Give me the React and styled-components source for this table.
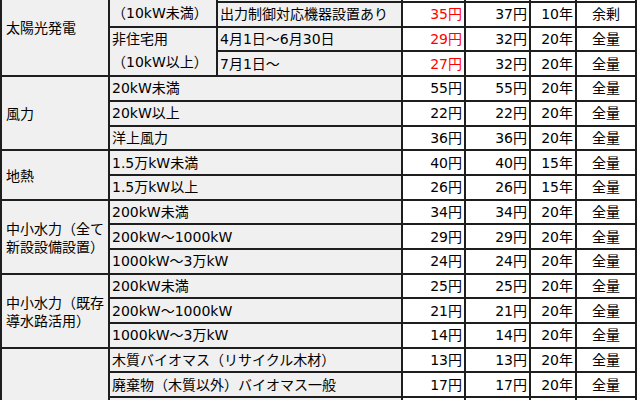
import styled, { createGlobalStyle } from "styled-components"

const GlobalStyle = createGlobalStyle`
  * {
    box-sizing: border-box;
  }
  body {
    margin: 0;
    background-color: #ffffff;
    font-family: "DejaVu Sans", "Noto Sans CJK JP", sans-serif;
  }
`

// larguras das colunas (borda incluida)
const colunas = [108, 108, 185, 63, 65, 46, 60]

const tarifas = [
  { grupo: "太陽光発電", gSpan: 4, sub: ["住宅用", "（10kW未満）"], sSpan: 2, item: "出力制御対応機器設置なし", novo: "33円", antigo: "37円", anos: "10年", tipo: "余剰", destaque: true },
  { item: "出力制御対応機器設置あり", novo: "35円", antigo: "37円", anos: "10年", tipo: "余剰", destaque: true },
  { sub: ["非住宅用", "（10kW以上）"], sSpan: 2, item: "4月1日～6月30日", novo: "29円", antigo: "32円", anos: "20年", tipo: "全量", destaque: true },
  { item: "7月1日～", novo: "27円", antigo: "32円", anos: "20年", tipo: "全量", destaque: true },
  { grupo: "風力", gSpan: 3, largo: true, item: "20kW未満", novo: "55円", antigo: "55円", anos: "20年", tipo: "全量" },
  { largo: true, item: "20kW以上", novo: "22円", antigo: "22円", anos: "20年", tipo: "全量" },
  { largo: true, item: "洋上風力", novo: "36円", antigo: "36円", anos: "20年", tipo: "全量" },
  { grupo: "地熱", gSpan: 2, largo: true, item: "1.5万kW未満", novo: "40円", antigo: "40円", anos: "15年", tipo: "全量" },
  { largo: true, item: "1.5万kW以上", novo: "26円", antigo: "26円", anos: "15年", tipo: "全量" },
  { grupo: "中小水力（全て新設設備設置）", gSpan: 3, largo: true, item: "200kW未満", novo: "34円", antigo: "34円", anos: "20年", tipo: "全量" },
  { largo: true, item: "200kW～1000kW", novo: "29円", antigo: "29円", anos: "20年", tipo: "全量" },
  { largo: true, item: "1000kW～3万kW", novo: "24円", antigo: "24円", anos: "20年", tipo: "全量" },
  { grupo: "中小水力（既存導水路活用）", gSpan: 3, largo: true, item: "200kW未満", novo: "25円", antigo: "25円", anos: "20年", tipo: "全量" },
  { largo: true, item: "200kW～1000kW", novo: "21円", antigo: "21円", anos: "20年", tipo: "全量" },
  { largo: true, item: "1000kW～3万kW", novo: "14円", antigo: "14円", anos: "20年", tipo: "全量" },
  { grupo: "バイオマス", gSpan: 6, largo: true, item: "木質バイオマス（リサイクル木材）", novo: "13円", antigo: "13円", anos: "20年", tipo: "全量" },
  { largo: true, item: "廃棄物（木質以外）バイオマス一般", novo: "17円", antigo: "17円", anos: "20年", tipo: "全量" },
  { largo: true, item: "一般木質バイオマス・農作物残さ", novo: "24円", antigo: "24円", anos: "20年", tipo: "全量" },
  { largo: true, item: "未利用木材（2000kW以上）", novo: "32円", antigo: "32円", anos: "20年", tipo: "全量" },
  { largo: true, item: "未利用木材（2000kW未満）", novo: "40円", antigo: "32円", anos: "20年", tipo: "全量" },
  { largo: true, item: "メタン発酵ガス", novo: "39円", antigo: "39円", anos: "20年", tipo: "全量" },
]

export default function App() {
  return (
    <Pagina>
      <GlobalStyle />
      <Tabela>
        <colgroup>
          {colunas.map((w, i) => (
            <Coluna key={i} $largura={w} />
          ))}
        </colgroup>
        <tbody>
          {tarifas.map((t, i) => (
            <Linha key={i}>
              {t.grupo && <Grupo rowSpan={t.gSpan}>{t.grupo}</Grupo>}
              {t.sub && (
                <Rotulo rowSpan={t.sSpan}>
                  {t.sub.map((s) => (
                    <SubLinha key={s}>{s}</SubLinha>
                  ))}
                </Rotulo>
              )}
              <Rotulo colSpan={t.largo ? 2 : 1}>{t.item}</Rotulo>
              <Valor $destaque={t.destaque}>{t.novo}</Valor>
              <Valor>{t.antigo}</Valor>
              <Valor>{t.anos}</Valor>
              <Tipo>{t.tipo}</Tipo>
            </Linha>
          ))}
        </tbody>
      </Tabela>
    </Pagina>
  )
}

const Pagina = styled.div`
  height: 100vh;
  overflow: hidden;
`
const Tabela = styled.table`
  width: 637px;
  margin-top: -23.7px;
  table-layout: fixed;
  border-collapse: separate;
  border-spacing: 0;
  border: 1px solid #1e1e1e;
  font-size: 14px;
  line-height: 18px;
  color: #000;
  text-spacing-trim: space-all;
`
const Coluna = styled.col`
  width: ${(p) => p.$largura}px;
`
const Linha = styled.tr`
  height: 24.7px;
`
const Celula = styled.td`
  border: 1px solid #1e1e1e;
  padding: 0 2px;
  vertical-align: middle;
  white-space: nowrap;
`
const Grupo = styled(Celula)`
  background-color: #f0f0f0;
  padding: 2px 2px 0 4px;
  white-space: normal;
`
const Rotulo = styled(Celula)`
  background-color: #f0f0f0;
`
const SubLinha = styled.div`
  line-height: 23.7px;
`
const Valor = styled(Celula)`
  text-align: right;
  color: ${(p) => (p.$destaque ? "#ff0000" : "#000")};
`
const Tipo = styled(Celula)`
  text-align: center;
`
